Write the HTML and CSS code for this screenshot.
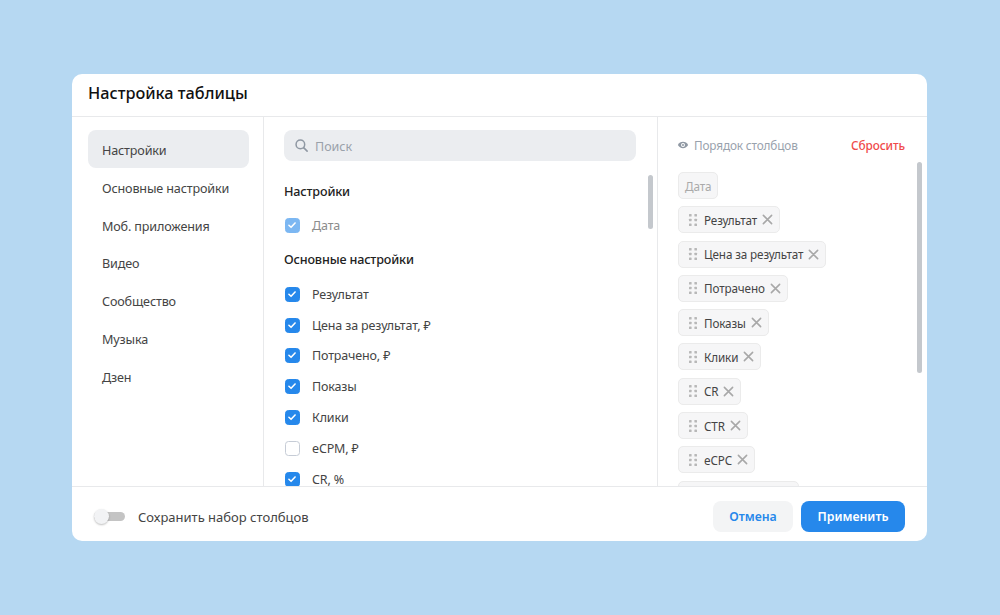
FILE: index.html
```html
<!DOCTYPE html>
<html lang="ru">
<head>
<meta charset="utf-8">
<title>Настройка таблицы</title>
<link rel="stylesheet" href="styles.css">
</head>
<body>
<svg class="defs" width="0" height="0" aria-hidden="true">
  <defs>
    <symbol id="check" viewBox="0 0 14 14"><path d="M3.4 7.3 5.9 9.700 10.600 4.600" fill="none" stroke="#fff" stroke-width="1.800" stroke-linecap="round" stroke-linejoin="round"/></symbol>
    <symbol id="grip" viewBox="0 0 10 14"><g fill="#b8b8b8"><rect x="1" y="1" width="2.600" height="2.600" rx=".6"/><rect x="6.400" y="1" width="2.600" height="2.600" rx=".6"/><rect x="1" y="5.700" width="2.600" height="2.600" rx=".6"/><rect x="6.400" y="5.700" width="2.600" height="2.600" rx=".6"/><rect x="1" y="10.400" width="2.600" height="2.600" rx=".6"/><rect x="6.400" y="10.400" width="2.600" height="2.600" rx=".6"/></g></symbol>
    <symbol id="cross" viewBox="0 0 12 12"><path d="M1.500 1.500 10.500 10.500M10.500 1.500 1.500 10.500" fill="none" stroke="#a8a8a8" stroke-width="1.700" stroke-linecap="round"/></symbol>
  </defs>
</svg>
<main class="modal">
  <header class="modal-head"><h1 class="modal-title">Настройка таблицы</h1></header>
  <div class="modal-body">
    <nav class="side">
      <a class="side-item is-active">Настройки</a>
      <a class="side-item">Основные настройки</a>
      <a class="side-item">Моб. приложения</a>
      <a class="side-item">Видео</a>
      <a class="side-item">Сообщество</a>
      <a class="side-item">Музыка</a>
      <a class="side-item">Дзен</a>
    </nav>
    <section class="mid">
      <div class="search">
        <svg class="search-icon" viewBox="0 0 16 16"><circle cx="6.800" cy="6.800" r="4.600" fill="none" stroke="#8f98a3" stroke-width="1.600"/><path d="M10.300 10.300 14 14" stroke="#8f98a3" stroke-width="1.700" stroke-linecap="round"/></svg>
        <span class="search-text">Поиск</span>
      </div>
      <h2 class="group-title">Настройки</h2>
      <div class="check-row is-disabled"><span class="box on"><svg class="tick"><use href="#check"/></svg></span><span>Дата</span></div>
      <h2 class="group-title group-second">Основные настройки</h2>
      <div class="check-list">
        <div class="check-row"><span class="box on"><svg class="tick"><use href="#check"/></svg></span><span>Результат</span></div>
        <div class="check-row"><span class="box on"><svg class="tick"><use href="#check"/></svg></span><span>Цена за результат, ₽</span></div>
        <div class="check-row"><span class="box on"><svg class="tick"><use href="#check"/></svg></span><span>Потрачено, ₽</span></div>
        <div class="check-row"><span class="box on"><svg class="tick"><use href="#check"/></svg></span><span>Показы</span></div>
        <div class="check-row"><span class="box on"><svg class="tick"><use href="#check"/></svg></span><span>Клики</span></div>
        <div class="check-row"><span class="box"></span><span>eCPM, ₽</span></div>
        <div class="check-row"><span class="box on"><svg class="tick"><use href="#check"/></svg></span><span>CR, %</span></div>
      </div>
      <div class="scrollbar scrollbar-mid"></div>
    </section>
    <aside class="order">
      <div class="order-head">
        <span class="order-title">
          <svg class="eye" viewBox="0 0 14 14"><path d="M1 7C2.300 4.600 4.400 3.300 7 3.300S11.700 4.600 13 7C11.700 9.400 9.600 10.700 7 10.700S2.300 9.400 1 7Z" fill="#8f98a3"/><circle cx="7" cy="7" r="2.300" fill="#fff"/><circle cx="7" cy="7" r="1.200" fill="#8f98a3"/></svg>
          Порядок столбцов
        </span>
        <span class="reset">Сбросить</span>
      </div>
      <div class="chips">
        <div class="chip chip-fixed">Дата</div>
        <div class="chip"><svg class="grip"><use href="#grip"/></svg><span>Результат</span><svg class="cross"><use href="#cross"/></svg></div>
        <div class="chip"><svg class="grip"><use href="#grip"/></svg><span>Цена за результат</span><svg class="cross"><use href="#cross"/></svg></div>
        <div class="chip"><svg class="grip"><use href="#grip"/></svg><span>Потрачено</span><svg class="cross"><use href="#cross"/></svg></div>
        <div class="chip"><svg class="grip"><use href="#grip"/></svg><span>Показы</span><svg class="cross"><use href="#cross"/></svg></div>
        <div class="chip"><svg class="grip"><use href="#grip"/></svg><span>Клики</span><svg class="cross"><use href="#cross"/></svg></div>
        <div class="chip"><svg class="grip"><use href="#grip"/></svg><span>CR</span><svg class="cross"><use href="#cross"/></svg></div>
        <div class="chip"><svg class="grip"><use href="#grip"/></svg><span>CTR</span><svg class="cross"><use href="#cross"/></svg></div>
        <div class="chip"><svg class="grip"><use href="#grip"/></svg><span>eCPC</span><svg class="cross"><use href="#cross"/></svg></div>
        <div class="chip chip-cut"></div>
      </div>
      <div class="scrollbar scrollbar-order"></div>
    </aside>
  </div>
  <footer class="modal-foot">
    <div class="save">
      <span class="toggle"><span class="knob"></span></span>
      <span class="save-label">Сохранить набор столбцов</span>
    </div>
    <div class="actions">
      <button class="btn btn-cancel">Отмена</button>
      <button class="btn btn-apply">Применить</button>
    </div>
  </footer>
</main>
</body>
</html>
```
FILE: styles.css
```css
* { box-sizing: border-box; }
html, body { margin: 0; height: 615px; overflow: hidden; }
body {
  background: #b6d8f2;
  font-family: "Noto Sans", Inter, sans-serif;
  color: #222;
  padding: 74px 72px;
  white-space: nowrap;
}
.defs { position: absolute; }
.modal {
  width: 855px;
  height: 467px;
  background: #fff;
  border-radius: 10px;
  display: flex;
  flex-direction: column;
  overflow: hidden;
}
.modal-head {
  height: 43px;
  flex: none;
  border-bottom: 1px solid #e8e9eb;
  padding: 0 16px 4px;
  display: flex;
  align-items: center;
}
.modal-title { margin: 0; font-size: 16.300px; font-weight: 500; color: #111; }
.modal-body { flex: 1; min-height: 0; display: flex; }
.side {
  width: 192px;
  flex: none;
  border-right: 1px solid #e8e9eb;
  padding: 13px 14px 0 16px;
  display: flex;
  flex-direction: column;
}
.side-item {
  height: 37.800px;
  flex: none;
  border-radius: 8px;
  padding: 0 14px;
  font-size: 12.600px;
  letter-spacing: -.15px;
  line-height: 41.500px;
  color: #444;
}
.is-active { background: #ebedf0; }
.mid {
  position: relative;
  width: 394px;
  flex: none;
  border-right: 1px solid #e8e9eb;
  padding: 13px 20px 0 20px;
  overflow: hidden;
}
.search {
  height: 31px;
  background: #ebedf0;
  border-radius: 8px;
  display: flex;
  align-items: center;
  padding: 0 10px;
  gap: 6px;
  margin-right: 1px;
}
.search-icon { width: 15px; height: 15px; }
.search-text { font-size: 12.500px; color: #9aa1aa; padding-top: 1px; }
.group-title {
  margin: 0;
  font-size: 12.600px;
  letter-spacing: -.15px;
  font-weight: 500;
  color: #222;
  padding-top: 21px;
  line-height: 20px;
}
.group-second { padding-top: 9.500px; }
.check-row {
  height: 30.800px;
  display: flex;
  align-items: center;
  gap: 12px;
  font-size: 12.500px;
  letter-spacing: -.15px;
  color: #444;
  flex: none;
}
.group-title + .check-row { margin-top: 8px; }
.is-disabled { color: #8c8c8c; }
.is-disabled .box { opacity: .6; }
.group-second + .check-list { margin-top: 8.600px; }
.box {
  width: 15px;
  height: 15px;
  border-radius: 3.500px;
  border: 1.500px solid #c6ccd6;
  background: #fff;
  flex: none;
  display: flex;
  margin-left: 1px;
}
.box.on { background: #2688eb; border-color: #2688eb; }
.tick { width: 12px; height: 12px; }
.scrollbar {
  position: absolute;
  width: 5px;
  background: #c4c8cd;
  border-radius: 3px;
}
.scrollbar-mid { left: 384px; top: 58px; height: 54px; }
.order { position: relative; flex: 1; padding: 0 22px 0 20px; overflow: hidden; }
.order-head {
  display: flex;
  justify-content: space-between;
  align-items: center;
  height: 55px;
}
.order-title {
  display: flex;
  align-items: center;
  gap: 5px;
  margin-left: -1px;
  font-size: 11.800px;
  letter-spacing: -.15px;
  color: #99a2ad;
}
.eye { width: 12px; height: 12px; }
.reset { font-size: 11.800px; letter-spacing: -.1px; color: #f04a4a; font-weight: 500; }
.chips { display: flex; flex-direction: column; align-items: flex-start; gap: 7.300px; }
.chip {
  height: 27px;
  flex: none;
  display: flex;
  align-items: center;
  border: 1px solid #ebebeb;
  background: #f6f6f7;
  border-radius: 5px;
  padding: 0 6px 0 9px;
  font-size: 11.700px;
  letter-spacing: -.12px;
  color: #444;
}
.chip-fixed { padding: 0 6px; color: #aaa; }
.chip-cut { width: 121px; }
.grip { width: 10px; height: 14px; margin-right: 6px; }
.cross { width: 11px; height: 11px; margin-left: 5px; }
.scrollbar-order { left: 259px; top: 45px; height: 211px; }
.modal-foot {
  height: 55px;
  flex: none;
  border-top: 1px solid #e8e9eb;
  display: flex;
  justify-content: space-between;
  align-items: center;
  padding: 4px 22px 0;
}
.save { display: flex; align-items: center; gap: 13px; font-size: 13px; color: #444; }
.save-label { padding-top: 1px; }
.toggle {
  position: relative;
  width: 31px;
  height: 9px;
  border-radius: 5px;
  background: #c4c4c4;
  display: block;
}
.knob {
  position: absolute;
  left: 0;
  top: -3px;
  width: 15px;
  height: 15px;
  border-radius: 50%;
  background: #f2f3f5;
  box-shadow: 0 1px 2px rgba(0,0,0,.25);
}
.actions { display: flex; gap: 8px; }
.btn {
  height: 31px;
  border: 0;
  border-radius: 8px;
  font: 600 12.300px "Noto Sans", Inter, sans-serif;
}
.btn-cancel { width: 80px; background: #f3f4f5; color: #2688eb; }
.btn-apply { width: 104px; background: #2688eb; color: #fff; }
```
